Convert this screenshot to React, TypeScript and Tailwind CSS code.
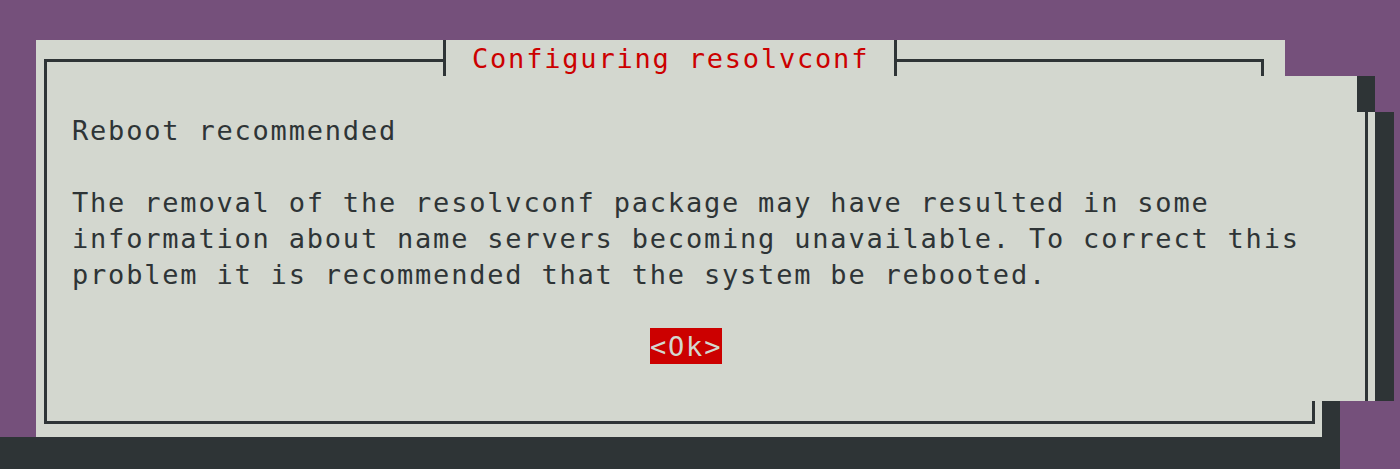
const lines = [
  "Reboot recommended",
  "",
  "The removal of the resolvconf package may have resulted in some",
  "information about name servers becoming unavailable. To correct this",
  "problem it is recommended that the system be rebooted.",
  "",
]

export default function App() {
  return (
    <div className="w-[1400px] h-[469px] overflow-hidden bg-[#75507b] flex flex-col font-['DejaVu_Sans_Mono',monospace] text-[27px] tracking-[1.8px] text-[#2e3436] leading-none">
      {/* top margin */}
      <div className="h-[40px] shrink-0" />

      {/* title row */}
      <div className="h-[36px] shrink-0 flex">
        <div className="w-[36px] shrink-0" />
        <div className="w-[1249px] shrink-0 bg-[#d3d7cf] flex">
          <div className="w-[8px] shrink-0" />
          <div className="w-[399px] shrink-0 mt-[19px] h-[17px] border-l-[3px] border-t-[3px] border-[#2e3436]" />
          <div className="w-[3px] shrink-0 bg-[#2e3436]" />
          <div className="w-[448px] shrink-0 flex items-center pl-[26px] text-[#cc0000] whitespace-pre">
            Configuring resolvconf
          </div>
          <div className="w-[3px] shrink-0 bg-[#2e3436]" />
          <div className="w-[367px] shrink-0 mt-[19px] h-[17px] border-r-[3px] border-t-[3px] border-[#2e3436]" />
        </div>
      </div>

      {/* empty row under title */}
      <div className="h-[36px] shrink-0 flex">
        <div className="w-[36px] shrink-0" />
        <div className="w-[1321px] shrink-0 bg-[#d3d7cf] flex">
          <div className="ml-[8px] border-l-[3px] border-[#2e3436]" />
        </div>
        <div className="w-[18px] shrink-0 bg-[#2e3436]" />
      </div>

      {/* body */}
      <div className="h-[289px] shrink-0 flex">
        <div className="w-[36px] shrink-0" />
        <div className="w-[1339px] shrink-0 bg-[#d3d7cf] flex">
          <div className="flex-1 ml-[8px] mr-[7px] border-l-[3px] border-r-[3px] border-[#2e3436] pl-[25px] flex flex-col">
            {lines.map((line, i) => (
              <div key={i} className="h-[36px] shrink-0 flex items-center whitespace-pre">
                {line}
              </div>
            ))}
            <div className="h-[36px] shrink-0 flex items-center">
              <span className="ml-[578px] h-[36px] px-[0px] flex items-center bg-[#cc0000] text-[#d3d7cf] whitespace-pre">
                &lt;Ok&gt;
              </span>
            </div>
          </div>
        </div>
        <div className="w-[19px] shrink-0 bg-[#2e3436]" />
      </div>

      {/* bottom border row */}
      <div className="h-[36px] shrink-0 flex">
        <div className="w-[36px] shrink-0" />
        <div className="w-[1286px] shrink-0 bg-[#d3d7cf]">
          <div className="ml-[8px] w-[1271px] h-[23px] border-l-[3px] border-r-[3px] border-b-[3px] border-[#2e3436]" />
        </div>
        <div className="w-[18px] shrink-0 bg-[#2e3436]" />
      </div>

      {/* shadow row */}
      <div className="h-[32px] shrink-0 flex">
        <div className="w-[1340px] shrink-0 bg-[#2e3436]" />
      </div>
    </div>
  )
}
